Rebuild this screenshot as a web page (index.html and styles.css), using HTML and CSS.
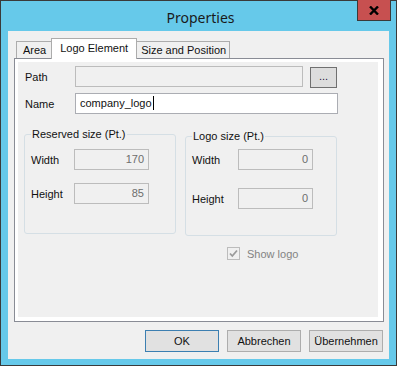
FILE: index.html
```html
<!DOCTYPE html>
<html lang="en">
<head>
  <meta charset="UTF-8">
  <title>Properties</title>
  <link rel="stylesheet" href="styles.css">
</head>
<body>
  <div class="window">
    <div class="titlebar">
      <span class="title">Properties</span>
      <div class="close">
        <svg width="10" height="9" viewBox="0 0 10 9"><path d="M1 0.5 L9 8.5 M9 0.5 L1 8.5" stroke="#000" stroke-width="2.4" fill="none"/></svg>
      </div>
    </div>
    <div class="client">
      <div class="tabs">
        <div class="tab">Area</div>
        <div class="tab active">Logo Element</div>
        <div class="tab">Size and Position</div>
      </div>
      <div class="panel">
        <div class="page">
          <div class="row">
            <label>Path</label>
            <div class="box off path"></div>
            <button type="button" class="browse">...</button>
          </div>
          <div class="row">
            <label>Name</label>
            <div class="box name">company_logo<span class="caret"></span></div>
          </div>
          <div class="groups">
            <fieldset class="group reserved">
              <legend>Reserved size (Pt.)</legend>
              <div class="field"><label>Width</label><div class="box off">170</div></div>
              <div class="field"><label>Height</label><div class="box off">85</div></div>
            </fieldset>
            <div class="col">
              <fieldset class="group logo">
                <legend>Logo size (Pt.)</legend>
                <div class="field"><label>Width</label><div class="box off">0</div></div>
                <div class="field"><label>Height</label><div class="box off">0</div></div>
              </fieldset>
              <div class="check">
                <svg width="13" height="13" viewBox="0 0 13 13"><rect x="0.5" y="0.5" width="12" height="12" fill="#f0f0f0" stroke="#bcbcbc"/><path d="M3 6.5 L5.3 9 L10 3.5" stroke="#9a9a9a" stroke-width="1.8" fill="none"/></svg>
                <span>Show logo</span>
              </div>
            </div>
          </div>
        </div>
      </div>
      <div class="buttons">
        <button type="button" class="btn default">OK</button>
        <button type="button" class="btn">Abbrechen</button>
        <button type="button" class="btn">Übernehmen</button>
      </div>
    </div>
  </div>
</body>
</html>
```

FILE: styles.css
```css
body {
  margin: 0;
  font-family: "Liberation Sans", Arial, sans-serif;
  font-size: 11px;
  color: #111;
}
.window {
  position: relative;
  width: 397px;
  height: 366px;
  box-sizing: border-box;
  border: 1px solid #3a3a3a;
  background-color: #66c9ea;
  padding: 0 7px 6px;
  display: flex;
  flex-direction: column;
}
.titlebar {
  height: 30px;
  display: flex;
  align-items: center;
  justify-content: center;
}
.title {
  font-family: "Noto Sans", sans-serif;
  font-size: 14px;
  color: #1a1a1a;
  margin-left: 4px;
  margin-top: 2px;
}
.close {
  position: absolute;
  top: -1px;
  right: 5px;
  width: 34px;
  height: 21px;
  box-sizing: border-box;
  background-color: #c75050;
  border: 1px solid #3a3a3a;
  border-top: none;
  display: flex;
  align-items: center;
  justify-content: center;
}
.client {
  flex: 1;
  background-color: #f0f0f0;
  padding: 7px 5px 0 6px;
  display: flex;
  flex-direction: column;
}
.tabs {
  position: relative;
  z-index: 1;
  display: flex;
  align-items: flex-end;
  height: 20px;
  margin-left: 2px;
}
.tab {
  height: 16px;
  line-height: 17px;
  padding: 0 5px 0 6px;
  border: 1px solid #acacac;
  border-bottom: none;
  background-color: #f0f0f0;
}
.tab:last-child {
  padding: 0 3px 0 4px;
}
.tab + .tab {
  margin-left: -1px;
}
.tab.active {
  height: 20px;
  line-height: 19px;
  padding: 0 8px;
  margin-bottom: -1px;
  background-color: #fff;
}
.panel {
  width: 370px;
  height: 264px;
  box-sizing: border-box;
  border: 1px solid #898c95;
  background-color: #fff;
  padding: 3px 5px 4px 3px;
  display: flex;
}
.page {
  flex: 1;
  background-color: #f0f0f0;
  padding: 4px 0 0 6px;
}
.row {
  display: flex;
  align-items: center;
  height: 21px;
  padding-left: 1px;
}
.row + .row {
  margin-top: 6px;
}
.row label {
  width: 50px;
}
.box {
  height: 21px;
  box-sizing: border-box;
  border: 1px solid #abadb3;
  background-color: #fff;
  padding: 0 4px 0 4px;
  line-height: 19px;
  white-space: nowrap;
}
.box.off {
  background-color: #f0f0f0;
  border-color: #bcbcbc;
  color: #6d6d6d;
  text-align: right;
}
.path {
  width: 228px;
}
.browse {
  width: 27px;
  height: 21px;
  margin: 2px 0 0 7px;
  padding: 0 0 4px;
  border: 1px solid #707070;
  background-color: #dddddd;
  font-family: "Liberation Sans", Arial, sans-serif;
  font-size: 11px;
  color: #2a1040;
}
.name {
  width: 263px;
  padding-left: 4px;
}
.caret {
  display: inline-block;
  width: 1px;
  height: 14px;
  background-color: #000;
  vertical-align: -3px;
  margin-left: 1px;
}
.groups {
  display: flex;
  margin-top: 14px;
  gap: 9px;
}
.group {
  margin: 0;
  width: 152px;
  height: 106px;
  box-sizing: border-box;
  padding: 8px 0 0 6px;
  border: 1px solid #d5dfe5;
  border-radius: 3px;
}
.group legend {
  padding: 0 1px;
  line-height: 13px;
  color: #111;
}
.field {
  display: flex;
  align-items: center;
}
.field label {
  width: 43px;
}
.field .box {
  width: 75px;
}
.field + .field {
  margin-top: 13px;
}
.logo {
  margin-top: 2px;
  padding-top: 6px;
}
.logo .field label {
  width: 46px;
}
.logo .field + .field {
  margin-top: 18px;
}
.check {
  display: flex;
  align-items: center;
  gap: 7px;
  margin: 11px 0 0 42px;
  color: #838383;
}
.check svg {
  display: block;
}
.buttons {
  display: flex;
  justify-content: flex-end;
  gap: 8px;
  margin-top: 8px;
  padding-right: 1px;
}
.btn {
  width: 74px;
  height: 22px;
  padding: 0;
  border: 1px solid #adadad;
  background-color: #e1e1e1;
  font-family: "Liberation Sans", Arial, sans-serif;
  font-size: 11px;
  color: #111;
}
.btn.default {
  border-color: #3c7fb1;
}
```
